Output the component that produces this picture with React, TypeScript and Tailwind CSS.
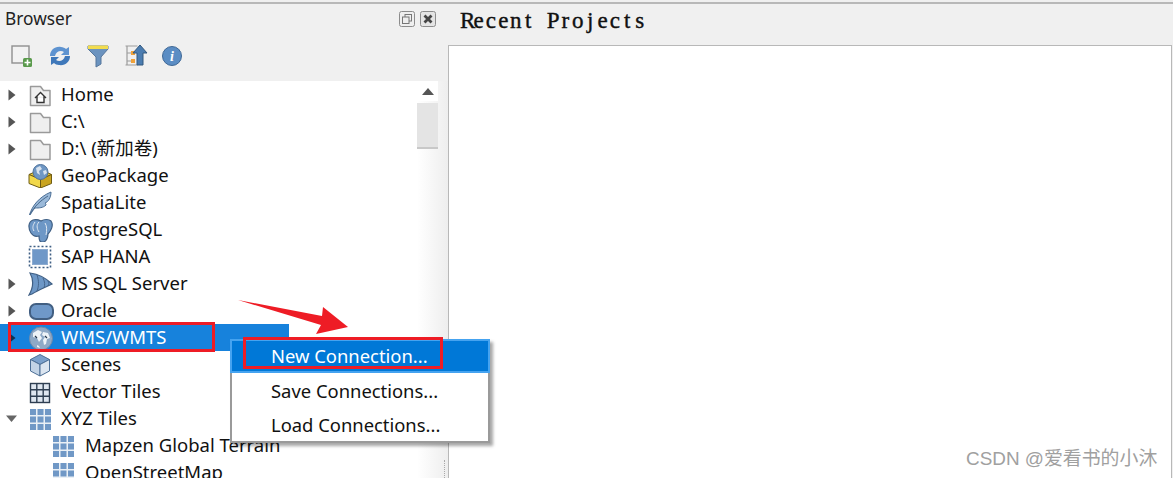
import React from "react";

const S = ({ children, w = 24, h = 24 }: { children: React.ReactNode; w?: number; h?: number }) => (
  <svg width={w} height={h} viewBox={`0 0 ${w} ${h}`} className="shrink-0">{children}</svg>
);

const Folder = ({ home }: { home?: boolean }) => (
  <S>
    <path d="M2.500 3.500h10l3 4h6.500v15h-19.500z" fill="#efefef" stroke="#9a9a9a" strokeWidth="1.500" strokeLinejoin="round" />
    {home && <path d="M7 15l5.500-5.500 5.500 5.500M9 13.500v6h7v-6" fill="#fff" stroke="#333" strokeWidth="1.400" />}
  </S>
);
const Geo = () => (
  <S>
    <path d="M1 10.500l11.500-5 11 5-11 5z" fill="#e8c93a" stroke="#6f5c14" />
    <path d="M1 10.500v9l11.500 4.500v-8.500z" fill="#f1d84a" stroke="#6f5c14" />
    <path d="M23.500 10.500v9l-11 4.500v-8.500z" fill="#c9a420" stroke="#6f5c14" />
    <circle cx="12.500" cy="8" r="7.500" fill="#6f97c4" stroke="#4f739c" />
    <path d="M8 4l4-2 2 3-3 2 1 4-3-2zM15 7l3-1 1 3-3 2z" fill="#d8e3ef" />
  </S>
);
const Feather = () => (
  <S>
    <path d="M1.500 24C4 15 11 6 23 1c0 6-3 10-6 11 1 1 1 1 1 2-3 3-7 3-11 3-2 2-3 4-5 7z" fill="#9ab9d9" stroke="#4c6f96" strokeWidth="1" />
    <path d="M2 23C7 15 12 10 20 5" fill="none" stroke="#47688c" strokeWidth="1" />
  </S>
);
const Pg = () => (
  <S w={26}>
    <path d="M5 2c4-1 6 0 8 1 3-2 8-2 10 0 3 4 0 10-3 13 0 4-2 8-5 8-3 1-4-2-4-6-3 1-6 0-8-3C0 10 0 4 5 2z" fill="#6d97c6" stroke="#3f5f84" strokeWidth="1.200" />
    <path d="M11 4c-3 3-2 7 0 10M17 5c2 3 2 7 1 12M7 4c-2 3-3 6-1 9" fill="none" stroke="#dfe8f2" strokeWidth="1" />
  </S>
);
const Hana = () => (
  <S>
    <rect x="1.500" y="1.500" width="21" height="21" fill="none" stroke="#3f5f84" strokeWidth="1.600" strokeDasharray="2 2" />
    <rect x="4.500" y="4.500" width="15" height="15" fill="#6f98c8" stroke="#8cabd0" />
  </S>
);
const Ms = () => (
  <S w={26}>
    <path d="M2 1c8 1 16 5 22 11-6 3-14 6-20 10l-3 1c4-7 5-15 1-22z" fill="#6d97c6" stroke="#3f5f84" strokeWidth="1.200" />
    <path d="M9 3c2 6 2 11 0 16M15 6c2 4 2 7 1 10M20 9c1 2 1 3 0 5" fill="none" stroke="#3f5f84" strokeWidth="0.900" />
  </S>
);
const Oracle = () => (
  <S w={26}>
    <rect x="2" y="5" width="23" height="15" rx="6" fill="#6f98c8" stroke="#425f82" strokeWidth="2" />
  </S>
);
const Globe = () => (
  <S w={26}>
    <circle cx="13" cy="12.500" r="11.500" fill="#8fa9c6" stroke="#6d89aa" />
    <path d="M5 7l5-3 4 2-2 3 2 3-3 4-2-4-4-1zM15 6l5 1 2 5-3 1-1 5-2 1-1-5 2-3-3-2zM9 19l2 1 1 2-3-1z" fill="#eef3f8" />
    <path d="M7 10l2 2M17 10l2 2" stroke="#26384d" strokeWidth="1.200" />
  </S>
);
const Cube = () => (
  <S>
    <path d="M12 1.500l9.500 5-9.500 5-9.500-5z" fill="#7aa0cb" stroke="#4c6f96" />
    <path d="M2.500 6.500v11.500l9.500 5v-11.500z" fill="#c3d4e6" stroke="#4c6f96" />
    <path d="M21.500 6.500v11.500l-9.500 5v-11.500z" fill="#dbe5f0" stroke="#4c6f96" />
  </S>
);
const VectorGrid = () => (
  <S>
    <rect x="2.500" y="3.500" width="19" height="19" fill="#dfe7f0" stroke="#2f3f52" strokeWidth="1.400" />
    <path d="M8.800 3.500v19M15.200 3.500v19M2.500 9.800h19M2.500 16.200h19" stroke="#2f3f52" strokeWidth="1.400" />
  </S>
);
const Tiles = () => (
  <S>
    <rect x="2" y="2" width="21" height="21" fill="#eaf0f6" />
    {[2, 9.5, 17].map((y) =>
      [2, 9.5, 17].map((x) => <rect key={`${x}-${y}`} x={x} y={y} width="6" height="6" fill="#7098c6" />)
    )}
  </S>
);

type Row = { label: string; icon: React.ReactNode; arrow?: "right" | "down"; indent?: boolean; sel?: boolean };
const rows: Row[] = [
  { label: "Home", icon: <Folder home />, arrow: "right" },
  { label: "C:\\", icon: <Folder />, arrow: "right" },
  { label: "D:\\ (新加卷)", icon: <Folder />, arrow: "right" },
  { label: "GeoPackage", icon: <Geo /> },
  { label: "SpatiaLite", icon: <Feather /> },
  { label: "PostgreSQL", icon: <Pg /> },
  { label: "SAP HANA", icon: <Hana /> },
  { label: "MS SQL Server", icon: <Ms />, arrow: "right" },
  { label: "Oracle", icon: <Oracle />, arrow: "right" },
  { label: "WMS/WMTS", icon: <Globe />, arrow: "right", sel: true },
  { label: "Scenes", icon: <Cube /> },
  { label: "Vector Tiles", icon: <VectorGrid /> },
  { label: "XYZ Tiles", icon: <Tiles />, arrow: "down" },
  { label: "Mapzen Global Terrain", icon: <Tiles />, indent: true },
  { label: "OpenStreetMap", icon: <Tiles />, indent: true },
];

const TreeRow = ({ r }: { r: Row }) => (
  <div className={`flex h-[27px] items-center shrink-0 ${r.sel ? "w-[289px] bg-[#1782dc] text-white" : "text-[#111]"}`}>
    <span className="flex w-[24px] shrink-0 justify-start pl-[8px]">
      {r.arrow === "right" && (
        <svg width="8" height="12" viewBox="0 0 8 12"><path d="M0.500 0.500l7 5.500-7 5.500z" fill={r.sel ? "#12304f" : "#555"} /></svg>
      )}
      {r.arrow === "down" && (
        <svg width="12" height="8" viewBox="0 0 12 8" className="-ml-[2px]"><path d="M0 0.500h11l-5.500 6.500z" fill="#666" /></svg>
      )}
    </span>
    <span className={`flex shrink-0 justify-start ${r.indent ? "ml-[27px] w-[34px]" : "ml-[4px] w-[33px]"}`}>{r.icon}</span>
    <span className="mb-[2px] whitespace-nowrap text-[18.500px] leading-[25px]">{r.label}</span>
  </div>
);

const Recent = "Recent Projects";

export default function App() {
  return (
    <div className="relative flex h-[478px] w-[1173px] overflow-hidden bg-[#f0f0f0] font-['Noto_Sans','Noto_Sans_CJK_SC',sans-serif]">
      {/* left panel */}
      <div className="flex w-[448px] shrink-0 flex-col pt-[2px]">
        <div className="h-[2px] w-full shrink-0 bg-[#b8b8b8]" />
        <div className="flex h-[30px] shrink-0 items-center justify-between pl-[5px] pr-[12px]">
          <span className="text-[17.300px] leading-none text-[#222]">Browser</span>
          <div className="flex gap-[5px]">
            <svg width="16" height="16" viewBox="0 0 16 16">
              <rect x="0.500" y="0.500" width="15" height="15" rx="2" fill="#efefef" stroke="#8c8c8c" />
              <rect x="6" y="3.500" width="6.500" height="6.500" fill="none" stroke="#777" />
              <rect x="3.500" y="6" width="6.500" height="6.500" fill="#efefef" stroke="#777" />
            </svg>
            <svg width="16" height="16" viewBox="0 0 16 16">
              <rect x="0.500" y="0.500" width="15" height="15" rx="2" fill="#e4e4e4" stroke="#8c8c8c" />
              <path d="M4.500 4.500l7 7M11.500 4.500l-7 7" stroke="#444" strokeWidth="2.800" />
            </svg>
          </div>
        </div>
        <div className="flex h-[47px] shrink-0 items-center gap-[16px] pb-[3px] pl-[11px]">
          <svg width="22" height="24" viewBox="0 0 22 24">
            <rect x="1" y="2" width="17" height="17" fill="#f2f2f2" stroke="#8f8f8f" strokeWidth="1.400" />
            <rect x="12" y="14" width="9" height="9" rx="1.500" fill="#5a9a4c" />
            <path d="M16.500 15.500v6M13.500 18.500h6" stroke="#fff" strokeWidth="1.600" />
          </svg>
          <svg width="22" height="22" viewBox="0 0 22 22">
            <path d="M1 11C1 5 6 1 12 2c2 0 4 1 5 2l3-2v8h-8l3-3c-3-2-8-1-9 4z" fill="#5e93d0" />
            <path d="M21 11c0 6-5 10-11 9-2 0-4-1-5-2l-3 2v-8h8l-3 3c3 2 8 1 9-4z" fill="#3f78ba" />
          </svg>
          <svg width="22" height="24" viewBox="0 0 22 24">
            <path d="M1 2h20v3l-7 8v7l-5 3v-10L1 5z" fill="#6b93bf" stroke="#56779c" />
            <rect x="1" y="1.500" width="20" height="3.500" fill="#f2dc4f" />
          </svg>
          <svg width="24" height="24" viewBox="0 0 24 24" className="-ml-[1px]">
            <path d="M1.500 2h12M3 2v19M1.500 21h12" fill="none" stroke="#9c9c9c" strokeWidth="1.200" />
            <path d="M3 9h5M3 17h5" stroke="#9c9c9c" />
            <rect x="7" y="7" width="4" height="4" fill="#f0a23a" />
            <rect x="7" y="15" width="4" height="4" fill="#f0a23a" />
            <path d="M16 1l7 8h-4v12h-6V9H9z" fill="#4b7cb0" stroke="#33587f" />
          </svg>
          <svg width="20" height="20" viewBox="0 0 20 20" className="-ml-[2px]">
            <circle cx="10" cy="10" r="9.500" fill="#5b8dc4" stroke="#3f6896" />
            <text x="10" y="15" textAnchor="middle" fontSize="14" fontStyle="italic" fontWeight="700" fill="#fff" fontFamily="'Liberation Serif',serif">i</text>
          </svg>
        </div>
        <div className="flex min-h-0 flex-1">
          <div className="flex w-[417px] shrink-0 flex-col overflow-hidden bg-white">
            {rows.map((r) => <TreeRow key={r.label} r={r} />)}
          </div>
          <div className="flex w-[31px] shrink-0 flex-col bg-gradient-to-r from-white to-[#eeeeee]">
            <div className="flex h-[20px] w-[21px] shrink-0 items-center justify-center bg-white">
              <svg width="12" height="7" viewBox="0 0 12 7"><path d="M6 0l6 7H0z" fill="#555" /></svg>
            </div>
            <div className="mt-[2px] h-[46px] w-[21px] shrink-0 border-b-2 border-[#c8c8c8] bg-[#e4e4e4]" />
            <div className="flex-1" />
            <div className="mb-0 ml-[27px] h-[18px] w-[2px] border-l border-dotted border-[#aaa]" />
          </div>
        </div>
      </div>
      {/* right panel */}
      <div className="flex min-w-0 flex-1 flex-col pt-[2px]">
        <div className="h-[2px] w-full shrink-0 bg-[#b8b8b8]" />
        <div className="flex h-[41px] shrink-0 items-start pl-[12px] pt-[3px] font-['Liberation_Serif',serif] text-[23px] leading-[28px] text-[#111] [-webkit-text-stroke:0.4px_#111]">
          <span className="whitespace-nowrap" aria-label={Recent}>
            {Recent.split("").map((c, i) => (
              <span key={i} className="inline-block w-[12.400px] text-center">{c === " " ? "\u00a0" : c}</span>
            ))}
          </span>
        </div>
        <div className="mr-[1px] flex-1 border-l border-t border-r border-[#b8b8b8] bg-white" />
      </div>

      {/* context menu */}
      <div className="absolute left-[230px] top-[339px] flex h-[104px] w-[260px] flex-col border-2 border-t-0 border-[#9a9a9a] bg-white text-[18.400px] text-[#111] shadow-[3px_3px_3px_rgba(0,0,0,0.35)]">
        <div className="-mx-[2px] flex h-[34px] shrink-0 items-center border-2 border-[#45a3f0] bg-[#0078d7] pl-[39px] text-white">New Connection...</div>
        <div className="flex h-[36px] shrink-0 items-center pl-[39px]">Save Connections...</div>
        <div className="flex h-[32px] shrink-0 items-center pl-[39px]">Load Connections...</div>
      </div>

      {/* annotations */}
      <div className="absolute left-[8px] top-[322px] h-[30px] w-[207px] border-[3px] border-[#ee1c25]" />
      <div className="absolute left-[243px] top-[337px] h-[32px] w-[200px] border-[3px] border-[#ee1c25]" />
      <svg className="absolute left-[236px] top-[298px]" width="116" height="40" viewBox="0 0 116 40">
        <path d="M2 2L86 18 87 9 112 29 80 36 85 27z" fill="#ee1c25" />
      </svg>

      {/* watermark */}
      <div className="absolute left-[966px] top-[447px] whitespace-nowrap font-['Liberation_Sans','Noto_Sans_CJK_SC',sans-serif] text-[18.900px] leading-[24px] text-[#a0a0a0]">CSDN @爱看书的小沐</div>
    </div>
  );
}
